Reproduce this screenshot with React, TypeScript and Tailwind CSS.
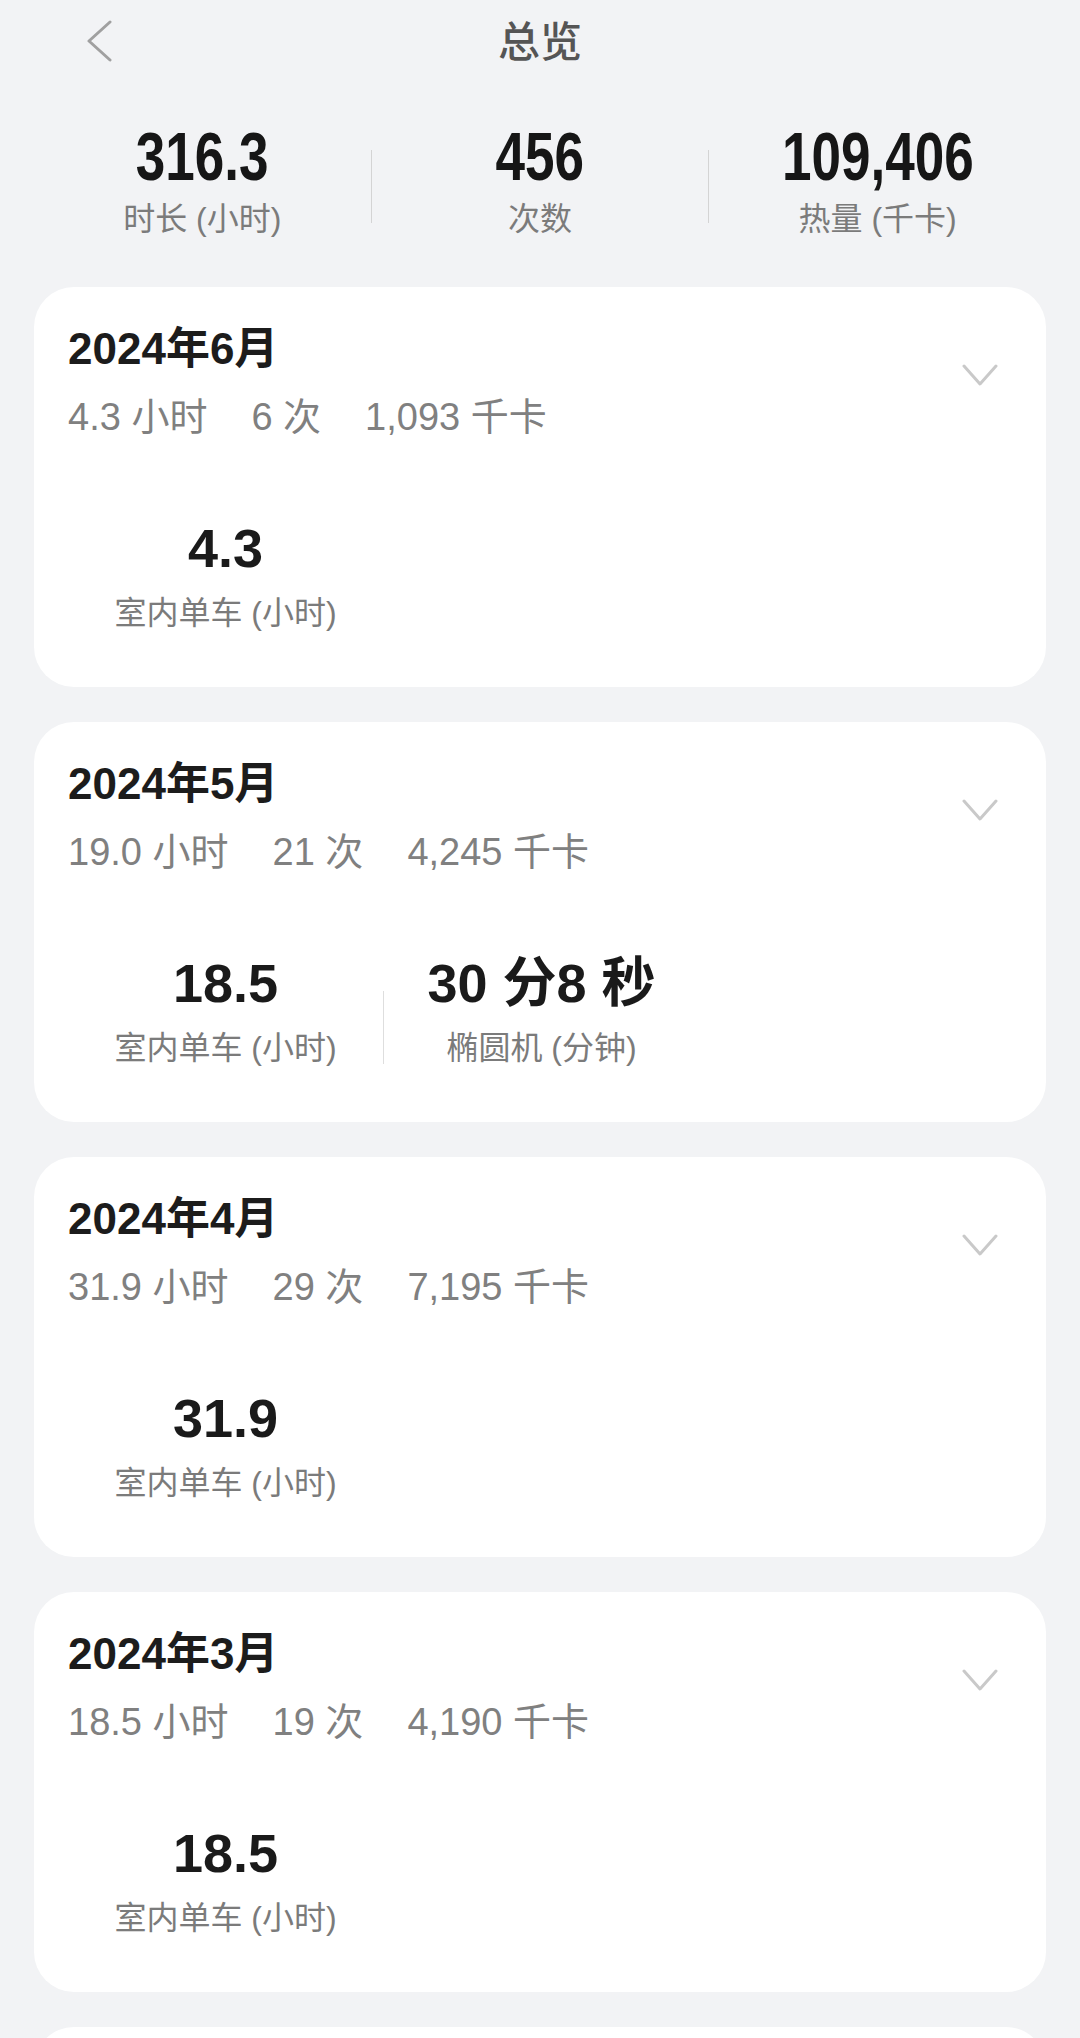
import React from 'react';

type Stat = { value: string; label: string };
type Month = { title: string; hours: string; count: string; kcal: string; stats: Stat[] };

const months: Month[] = [
  { title: '2024年6月', hours: '4.3', count: '6', kcal: '1,093', stats: [{ value: '4.3', label: '室内单车 (小时)' }] },
  {
    title: '2024年5月',
    hours: '19.0',
    count: '21',
    kcal: '4,245',
    stats: [
      { value: '18.5', label: '室内单车 (小时)' },
      { value: '30 分8 秒', label: '椭圆机 (分钟)' },
    ],
  },
  { title: '2024年4月', hours: '31.9', count: '29', kcal: '7,195', stats: [{ value: '31.9', label: '室内单车 (小时)' }] },
  { title: '2024年3月', hours: '18.5', count: '19', kcal: '4,190', stats: [{ value: '18.5', label: '室内单车 (小时)' }] },
];

const totals: Stat[] = [
  { value: '316.3', label: '时长 (小时)' },
  { value: '456', label: '次数' },
  { value: '109,406', label: '热量 (千卡)' },
];

const ChevronDown = () => (
  <svg width="36" height="22" viewBox="0 0 36 22" fill="none">
    <path d="M2 2 L18 20 L34 2" stroke="#c9c9c9" strokeWidth="3" strokeLinecap="round" strokeLinejoin="round" />
  </svg>
);

const MonthCard = ({ month }: { month: Month }) => (
  <div className="bg-white rounded-[40px] px-[34px] pt-[36px] pb-[54px]">
    <div className="flex items-start justify-between">
      <div>
        <div className="text-[44px] leading-[52px] font-semibold text-[#1c1c1c]">{month.title}</div>
        <div className="mt-[20px] flex gap-[44px] text-[38px] leading-[44px] text-[#808080]">
          <span>{month.hours} 小时</span>
          <span>{month.count} 次</span>
          <span>{month.kcal} 千卡</span>
        </div>
      </div>
      <div className="mt-[41px] mr-[14px]">
        <ChevronDown />
      </div>
    </div>
    <div className="mt-[82px] flex">
      {month.stats.map((s, i) => (
        <React.Fragment key={s.label}>
          {i > 0 && <div className="w-px h-[73px] self-end mb-[4px] bg-[#dedede]" />}
          <div className="w-[315px] flex flex-col items-center">
            <div className="text-[54px] leading-[54px] font-semibold text-[#1a1a1a]">{s.value}</div>
            <div className="mt-[18px] text-[32px] leading-[40px] text-[#7b7b7b]">{s.label}</div>
          </div>
        </React.Fragment>
      ))}
    </div>
  </div>
);

export default function App() {
  return (
    <div className="h-[2038px] overflow-hidden bg-[#f2f3f5] font-['Liberation_Sans','Noto_Sans_CJK_SC',sans-serif]">
      <div className="relative h-[84px] flex items-center justify-center">
        <svg className="absolute left-[86px] top-[20px]" width="26" height="42" viewBox="0 0 26 42" fill="none">
          <path d="M24 2 L3 21 L24 40" stroke="#a0a0a0" strokeWidth="3" strokeLinecap="round" strokeLinejoin="round" />
        </svg>
        <div className="text-[42px] font-medium text-[#555555]">总览</div>
      </div>

      <div className="mt-[42px] px-[34px] flex items-center">
        {totals.map((t, i) => (
          <React.Fragment key={t.label}>
            {i > 0 && <div className="w-px h-[73px] mt-[8px] bg-[#d4d4d4]" />}
            <div className="flex-1 flex flex-col items-center">
              <div className="text-[68px] leading-[60px] font-bold text-[#161616] scale-x-[0.78]">{t.value}</div>
              <div className="mt-[13px] text-[32px] leading-[40px] text-[#7b7b7b]">{t.label}</div>
            </div>
          </React.Fragment>
        ))}
      </div>

      <div className="mt-[48px] px-[34px] flex flex-col gap-[35px]">
        {months.map((m) => (
          <MonthCard key={m.title} month={m} />
        ))}
        <div className="bg-white rounded-[40px] h-[400px]" />
      </div>
    </div>
  );
}
